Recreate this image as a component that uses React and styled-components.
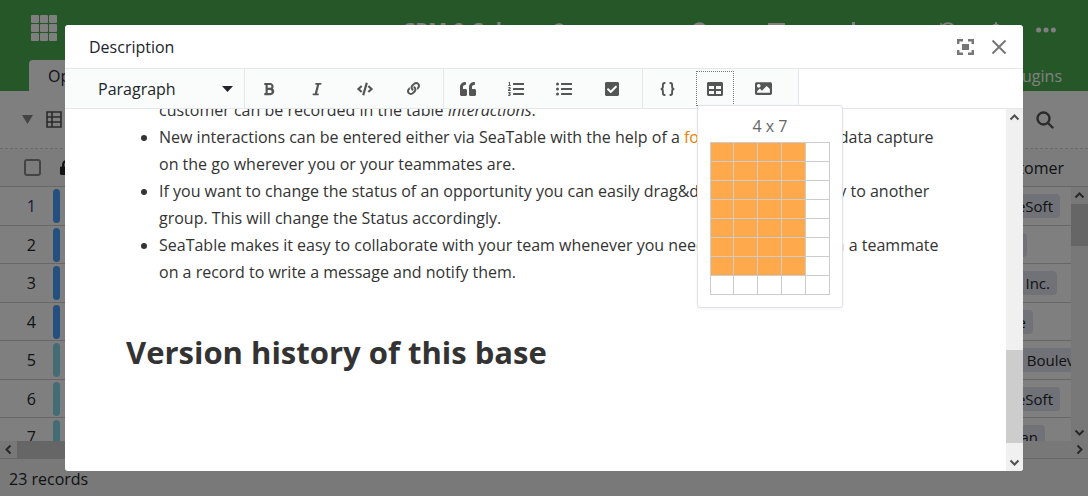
import React from "react";
import styled, { createGlobalStyle } from "styled-components";
import {
  FaBold, FaItalic, FaCode, FaLink, FaQuoteLeft, FaListOl, FaListUl,
  FaCheckSquare, FaTable, FaImage, FaLock, FaBell, FaInfoCircle,
  FaHistory, FaUserCircle,
} from "react-icons/fa";

const GlobalStyle = createGlobalStyle`
  * { box-sizing: border-box; }
  body {
    margin: 0;
    font-family: "Open Sans", "Noto Sans", sans-serif;
    font-size: 16px;
    line-height: 24px;
    color: #212529;
  }
  button, select, input { font: inherit; color: inherit; }
`;

/* ---------- base page ---------- */

const Page = styled.div`
  position: relative;
  display: flex;
  flex-direction: column;
  height: 100vh;
  overflow: hidden;
  background: #fff;
`;

const PlainButton = styled.button`
  display: inline-flex;
  align-items: center;
  justify-content: center;
  padding: 0;
  border: 0;
  background: none;
`;

const TopBar = styled.header`
  display: flex;
  flex-shrink: 0;
  align-items: center;
  height: 60px;
  padding: 0 32px 0 31px;
  background: #4caf50;
  color: #fff;
`;

const BaseTitle = styled.h1`
  display: flex;
  flex: 1;
  align-items: center;
  justify-content: center;
  gap: 28px;
  margin: 0 0 0 220px;
  font-size: 20px;
  line-height: 24px;
`;

const TopActions = styled.div`
  display: flex;
  align-items: center;
  gap: 60px;
`;

const ActionGroup = styled.div`
  display: flex;
  align-items: center;
  gap: 32px;
  margin-left: 18px;
`;

const TabBar = styled.nav`
  display: flex;
  flex-shrink: 0;
  justify-content: space-between;
  height: 31px;
  padding: 0 26px 0 29px;
  background: #4caf50;
`;

const Tab = styled.a`
  padding: 4px 19px;
  border-radius: 4px 4px 0 0;
  background: #fff;
  color: #212529;
  text-decoration: none;
`;

const PluginsButton = styled(PlainButton)`
  color: #fff;
`;

const ViewBar = styled.div`
  display: flex;
  flex-shrink: 0;
  align-items: center;
  gap: 13px;
  height: 58px;
  padding: 0 34px 0 22px;
  border-bottom: 1px dashed #d5d5dd;
  color: #555;
`;

const Spacer = styled.span`
  flex: 1;
`;

const HeadRow = styled.div`
  display: flex;
  flex-shrink: 0;
  align-items: center;
  gap: 18px;
  height: 38px;
  padding: 0 24px;
  border-bottom: 1px solid #cfcfcf;
  background: #f9f9f9;
`;

const CheckAll = styled.input`
  appearance: none;
  width: 17px;
  height: 17px;
  margin: 0;
  border: 2px solid #888;
  border-radius: 3px;
`;

const Records = styled.div`
  display: flex;
  flex: 1;
  min-height: 0;
`;

const Rows = styled.div`
  display: grid;
  flex: 1;
  grid-auto-rows: 39px 38px;
  align-content: start;
  min-width: 0;
  overflow: hidden;
`;

const Row = styled.div`
  display: flex;
  align-items: center;
  justify-content: space-between;
  border-bottom: 1px solid #cfcfcf;
  overflow: hidden;
`;

const RowNumber = styled.span`
  display: flex;
  align-items: center;
  justify-content: flex-end;
  gap: 17px;
  width: 60px;
  color: ${(p) => (p.$first ? "#33338a" : "#212529")};

  &::after {
    content: "";
    width: 7px;
    height: 34px;
    border-radius: 4px;
    background: ${(p) => p.$color};
  }
`;

const Pill = styled.span`
  height: 24px;
  margin-right: ${(p) => p.$end}px;
  padding: 0 7px;
  border-radius: 4px;
  background: #e3e4ee;
  font-size: 15px;
  white-space: nowrap;
`;

const Footer = styled.footer`
  flex-shrink: 0;
  height: 38px;
  padding: 8px 9px;
  border-top: 1px solid #cfcfcf;
  background: #f3f3f3;
`;

/* ---------- scroll bars ---------- */

const Bar = styled.div`
  display: flex;
  flex-shrink: 0;
  flex-direction: ${(p) => (p.$across ? "row" : "column")};
  ${(p) => (p.$across ? "height" : "width")}: 17px;
  background: #f0f0f0;
  color: #505050;
`;

const BarArrow = styled(PlainButton)`
  width: 17px;
  height: 17px;
`;

const BarTrack = styled.div`
  display: flex;
  flex: 1;
  flex-direction: ${(p) => (p.$across ? "row" : "column")};
  justify-content: ${(p) => (p.$end ? "flex-end" : "flex-start")};
  padding-bottom: ${(p) => (p.$end ? 11 : 0)}px;
`;

const Thumb = styled.div`
  ${(p) => (p.$across ? "width" : "height")}: ${(p) => p.$size};
  background: #cdcdcd;
`;

const turns = { up: 0, right: 90, down: 180, left: 270 };

function Chevron({ to }) {
  return (
    <svg width="11" height="11" viewBox="0 0 11 11" fill="none" stroke="currentColor" strokeWidth="2">
      <path d="M1.5 7.5 5.5 3.5 9.5 7.5" transform={`rotate(${turns[to]} 5.5 5.5)`} />
    </svg>
  );
}

function ScrollBar({ across, end, size }) {
  const [back, forward] = across ? ["left", "right"] : ["up", "down"];
  return (
    <Bar $across={across}>
      <BarArrow aria-label={`Scroll ${back}`}><Chevron to={back} /></BarArrow>
      <BarTrack $across={across} $end={end}><Thumb $across={across} $size={size} /></BarTrack>
      <BarArrow aria-label={`Scroll ${forward}`}><Chevron to={forward} /></BarArrow>
    </Bar>
  );
}

/* ---------- dialog ---------- */

const Overlay = styled.div`
  position: absolute;
  inset: 0;
  display: flex;
  padding: 25px 65px;
  background: rgba(0, 0, 0, 0.5);
`;

const Dialog = styled.section`
  display: flex;
  flex: 1;
  flex-direction: column;
  min-width: 0;
  border-radius: 3px;
  background: #fff;
  overflow: hidden;
`;

const DialogHeader = styled.div`
  display: flex;
  flex-shrink: 0;
  align-items: center;
  gap: 17px;
  height: 44px;
  padding: 0 16px 0 24px;
  border-bottom: 1px solid #e4e7eb;
  color: #777;
`;

const DialogTitle = styled.h2`
  flex: 1;
  margin: 0;
  font-size: 16px;
  font-weight: 400;
  line-height: 24px;
  color: #212529;
`;

const Toolbar = styled.div`
  display: flex;
  flex-shrink: 0;
  height: 40px;
  border-bottom: 1px solid #e4e7eb;
`;

const ToolGroup = styled.div`
  display: flex;
  align-items: center;
  gap: 10px;
  padding: 0 ${(p) => (p.$last ? 16 : 11)}px 0 5px;
  border-right: 1px solid #e4e7eb;
  background: #fafcfb;
`;

const StyleField = styled.label`
  display: flex;
  align-items: center;
  width: 180px;
  padding: 0 11px 0 33px;
  border-right: 1px solid #e4e7eb;
  background: #fafcfb;
`;

const StyleSelect = styled.select`
  flex: 1;
  appearance: none;
  padding: 0;
  border: 0;
  background: none;
`;

const ToolButton = styled(PlainButton)`
  width: 38px;
  height: 35px;
  border: 1px dotted ${(p) => (p.$active ? "#777" : "transparent")};
  font-size: ${(p) => p.$size || 14}px;
  color: #555;
`;

const PickerAnchor = styled.div`
  position: relative;
  display: flex;
`;

const Picker = styled.div`
  position: absolute;
  z-index: 1;
  top: 34px;
  left: 1px;
  padding: 8px 12px 12px;
  border: 1px solid #e0e2e8;
  border-radius: 3px;
  background: #fff;
  box-shadow: 0 1px 3px rgba(0, 0, 0, 0.06);
  text-align: center;
  color: #666;
`;

const PickerGrid = styled.div`
  display: grid;
  grid-template-columns: 23px repeat(4, 24px);
  grid-auto-rows: 19px;
  margin-top: 4px;
  border: solid #ccc;
  border-width: 1px 0 0 1px;
`;

const PickerCell = styled.button`
  padding: 0;
  border: solid #ccc;
  border-width: 0 1px 1px 0;
  background: ${(p) => (p.$on ? "#ffa94d" : "#fff")};
`;

const EditorArea = styled.div`
  display: flex;
  flex: 1;
  min-height: 0;
`;

const Editor = styled.article`
  display: flex;
  flex: 1;
  flex-direction: column;
  justify-content: flex-end;
  min-width: 0;
  padding: 0 50px 95px 61px;
  overflow: hidden;
  color: #333;
`;

const NoteList = styled.ul`
  flex-shrink: 0;
  margin: 0;
  padding-left: 33px;
  line-height: 27px;
`;

const NoteLink = styled.a`
  color: #eb8205;
  text-decoration: none;
`;

const NoteHeading = styled.h1`
  flex-shrink: 0;
  margin: 42px 0 0;
  font-size: 31px;
  font-weight: 700;
  line-height: 48px;
`;

const AppsIcon = () => (
  <svg width="26" height="26" viewBox="0 0 26 26" fill="currentColor">
    {[0, 9, 18].map((y) => [0, 9, 18].map((x) => (
      <rect key={`${x}-${y}`} x={x} y={y} width="8" height="8" rx="1" />
    )))}
  </svg>
);

const AppsButton = styled(PlainButton)`
  align-self: flex-start;
  margin-top: 15px;
`;

const Caret = ({ width = 11, height = 6 }) => (
  <svg width={width} height={height} viewBox="0 0 11 6" preserveAspectRatio="none" fill="currentColor">
    <path d="M0 0H11L5.5 6Z" />
  </svg>
);

const ViewCaret = styled.span`
  display: flex;
  color: #888;
`;

const GridIcon = () => (
  <svg width="16" height="17" viewBox="0 0 16 17" fill="none" stroke="currentColor" strokeWidth="1.6">
    <path d="M1 1H15V16H1ZM1 6H15M1 11H15M6 1V16" />
  </svg>
);

const SearchIcon = () => (
  <svg width="18" height="18" viewBox="0 0 18 18" fill="none" stroke="currentColor" strokeWidth="2.4" strokeLinecap="round">
    <circle cx="7.5" cy="7.5" r="6" />
    <path d="M12 12 16.5 16.5" />
  </svg>
);

const MenuIcon = () => (
  <svg width="17" height="14" viewBox="0 0 17 14" fill="none" stroke="currentColor" strokeWidth="3">
    <path d="M0 1.5H17M0 7H17M0 12.5H17" />
  </svg>
);

const PlusIcon = () => (
  <svg width="17" height="17" viewBox="0 0 17 17" fill="none" stroke="currentColor" strokeWidth="3">
    <path d="M8.5 0V17M0 8.5H17" />
  </svg>
);

const DotsIcon = () => (
  <svg width="20" height="6" viewBox="0 0 20 6" fill="currentColor">
    <circle cx="2.6" cy="3" r="2.5" /><circle cx="10" cy="3" r="2.5" /><circle cx="17.4" cy="3" r="2.5" />
  </svg>
);

const ExpandIcon = () => (
  <svg width="17" height="16" viewBox="0 0 17 16" fill="none" stroke="currentColor" strokeWidth="2.4">
    <path d="M1.2 5V1.2H6M11 1.2H15.8V5M15.8 11V14.8H11M6 14.8H1.2V11" />
    <rect x="5" y="5" width="7" height="6" fill="currentColor" stroke="none" />
  </svg>
);

const CloseIcon = () => (
  <svg width="16" height="16" viewBox="0 0 16 16" fill="none" stroke="currentColor" strokeWidth="2">
    <path d="M1.5 1.5 14.5 14.5M14.5 1.5 1.5 14.5" />
  </svg>
);

const BracesIcon = () => (
  <svg width="15" height="14" viewBox="0 0 15 14" fill="none" stroke="currentColor" strokeWidth="1.9">
    <path d="M5.4 1H4.6C3.4 1 2.9 1.6 2.9 2.7V4.8C2.9 6.2 2.2 7 .7 7C2.2 7 2.9 7.8 2.9 9.2V11.3C2.9 12.4 3.4 13 4.6 13H5.4" />
    <path d="M9.6 1H10.4C11.6 1 12.1 1.6 12.1 2.7V4.8C12.1 6.2 12.8 7 14.3 7C12.8 7 12.1 7.8 12.1 9.2V11.3C12.1 12.4 11.6 13 10.4 13H9.6" />
  </svg>
);

const BLUE = "#46a1fd";
const TEAL = "#89d8ea";

const records = [
  { color: BLUE, customer: "OrangeSoft", end: 11 },
  { color: BLUE, customer: "Nord", end: 44 },
  { color: BLUE, customer: "Sun Inc.", end: 14 },
  { color: BLUE, customer: "Lake", end: 38 },
  { color: TEAL, customer: "Boulevard", end: -34 },
  { color: TEAL, customer: "OrangeSoft", end: 11 },
  { color: TEAL, customer: "Milan", end: 26 },
];

const textTools = [
  ["Bold", FaBold, 14],
  ["Italic", FaItalic, 14],
  ["Inline code", FaCode, 16],
  ["Link", FaLink, 13],
];

const blockTools = [
  ["Quote", FaQuoteLeft, 16],
  ["Ordered list", FaListOl, 16],
  ["Unordered list", FaListUl, 16],
  ["Check list", FaCheckSquare, 16],
];

const PICK = { columns: 4, rows: 7 };

function ToolSet({ tools }) {
  return (
    <ToolGroup>
      {tools.map(([name, Icon, size]) => (
        <ToolButton key={name} aria-label={name} $size={size}><Icon /></ToolButton>
      ))}
    </ToolGroup>
  );
}

function TablePicker() {
  const cells = Array.from({ length: 40 }, (_, i) => ({ column: (i % 5) + 1, row: Math.floor(i / 5) + 1 }));
  return (
    <Picker>
      {`${PICK.columns} x ${PICK.rows}`}
      <PickerGrid>
        {cells.map(({ column, row }) => (
          <PickerCell
            key={`${column}-${row}`}
            aria-label={`${column} by ${row}`}
            $on={column <= PICK.columns && row <= PICK.rows}
          />
        ))}
      </PickerGrid>
    </Picker>
  );
}

export default function App() {
  return (
    <Page>
      <GlobalStyle />
      <TopBar>
        <AppsButton aria-label="Apps"><AppsIcon /></AppsButton>
        <BaseTitle>CRM &amp; Sales <FaInfoCircle size={14} /></BaseTitle>
        <TopActions>
          <FaUserCircle size={17} />
          <MenuIcon />
          <PlusIcon />
          <ActionGroup>
            <FaHistory size={16} />
            <FaBell size={16} />
            <PlainButton aria-label="More"><DotsIcon /></PlainButton>
          </ActionGroup>
        </TopActions>
      </TopBar>
      <TabBar>
        <Tab href="#opportunities">Opportunities</Tab>
        <PluginsButton>Plugins</PluginsButton>
      </TabBar>
      <ViewBar>
        <ViewCaret><Caret height={9} /></ViewCaret>
        <GridIcon />
        <Spacer />
        <PlainButton aria-label="Search"><SearchIcon /></PlainButton>
      </ViewBar>
      <HeadRow>
        <CheckAll type="checkbox" aria-label="Select all records" />
        <FaLock size={15} />
        <Spacer />
        Customer
      </HeadRow>
      <Records>
        <Rows>
          {records.map(({ color, customer, end }, i) => (
            <Row key={i}>
              <RowNumber $color={color} $first={i === 0}>{i + 1}</RowNumber>
              <Pill $end={end}>{customer}</Pill>
            </Row>
          ))}
        </Rows>
        <ScrollBar size="42px" />
      </Records>
      <ScrollBar across size="70%" />
      <Footer>23 records</Footer>

      <Overlay>
        <Dialog role="dialog" aria-labelledby="dialog-title">
          <DialogHeader>
            <DialogTitle id="dialog-title">Description</DialogTitle>
            <PlainButton aria-label="Full screen"><ExpandIcon /></PlainButton>
            <PlainButton aria-label="Close"><CloseIcon /></PlainButton>
          </DialogHeader>
          <Toolbar>
            <StyleField>
              <StyleSelect aria-label="Text style">
                <option>Paragraph</option>
              </StyleSelect>
              <Caret />
            </StyleField>
            <ToolSet tools={textTools} />
            <ToolSet tools={blockTools} />
            <ToolGroup $last>
              <ToolButton aria-label="Code block"><BracesIcon /></ToolButton>
              <PickerAnchor>
                <ToolButton aria-label="Table" $active $size={16}><FaTable /></ToolButton>
                <TablePicker />
              </PickerAnchor>
              <ToolButton aria-label="Image" $size={17}><FaImage /></ToolButton>
            </ToolGroup>
          </Toolbar>
          <EditorArea>
            <Editor>
              <NoteList>
                <li>
                  All interactions with a<br />customer can be recorded in the table <em>Interactions</em>.
                </li>
                <li>
                  New interactions can be entered either via SeaTable with the help of a <NoteLink href="#form">form</NoteLink>, which enables data capture
                  <br />on the go wherever you or your teammates are.
                </li>
                <li>
                  If you want to change the status of an opportunity you can easily drag&amp;drop the opportunity to another
                  <br />group. This will change the Status accordingly.
                </li>
                <li>
                  SeaTable makes it easy to collaborate with your team whenever you need it. Simply <NoteLink href="#mention">mention</NoteLink> a teammate
                  <br />on a record to write a message and notify them.
                </li>
              </NoteList>
              <NoteHeading>Version history of this base</NoteHeading>
            </Editor>
            <ScrollBar end size="93px" />
          </EditorArea>
        </Dialog>
      </Overlay>
    </Page>
  );
}
